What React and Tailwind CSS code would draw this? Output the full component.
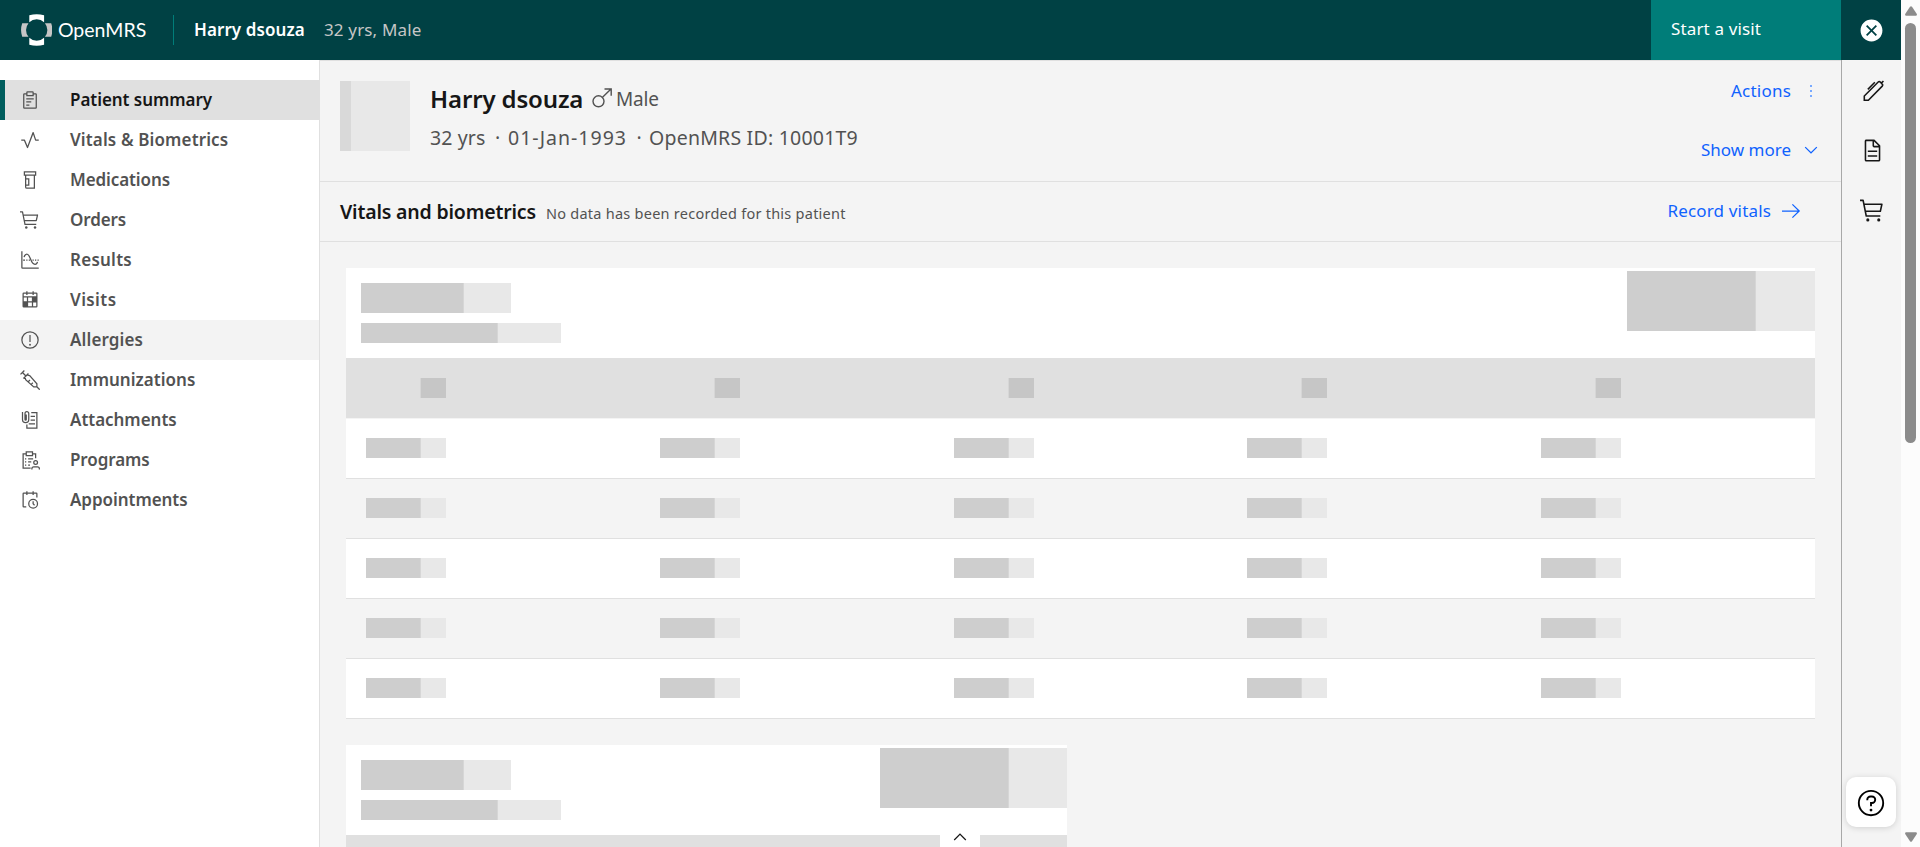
import React from "react";

const stroke = { fill: "none", stroke: "currentColor", strokeWidth: 2 };

function Icon({ className = "size-5", children }) {
  return (
    <svg viewBox="0 0 32 32" fill="currentColor" className={`block shrink-0 ${className}`} aria-hidden="true">
      {children}
    </svg>
  );
}

const Report = () => (
  <Icon>
    <path d="M10 18h8v2h-8zM10 13h12v2H10zM10 23h5v2h-5z" />
    <path d="M25,5H22V4a2,2,0,0,0-2-2H12a2,2,0,0,0-2,2V5H7A2,2,0,0,0,5,7V28a2,2,0,0,0,2,2H25a2,2,0,0,0,2-2V7A2,2,0,0,0,25,5ZM12,4h8V8H12ZM25,28H7V7h3v3H22V7h3Z" />
  </Icon>
);

const Activity = () => (
  <Icon>
    <path d="M12,29a1,1,0,0,1-.92-.62L6.33,17H2V15H7a1,1,0,0,1,.92.62L12,25.28,20.06,3.65A1,1,0,0,1,21,3a1,1,0,0,1,.93.68L25.72,15H30v2H25a1,1,0,0,1-.95-.68L21,7,12.94,28.35A1,1,0,0,1,12,29Z" />
  </Icon>
);

const Medication = () => (
  <Icon>
    <path {...stroke} d="M7 3h18v5H7zM9 9v18a2 2 0 0 0 2 2h12V9M9 14h5v10H9" />
  </Icon>
);

const Cart = ({ className }) => (
  <Icon className={className}>
    <circle cx="10" cy="28" r="2" />
    <circle cx="24" cy="28" r="2" />
    <path d="M28,7H5.82L5,2.8A1,1,0,0,0,4,2H0V4H3.18L7,23.2A1,1,0,0,0,8,24H26V22H8.82L8,18H26a1,1,0,0,0,1-.78l2-9A1,1,0,0,0,28,7ZM25.2,16H7.62L6.22,9H26.75Z" />
  </Icon>
);

const ChartAverage = () => (
  <Icon>
    <path {...stroke} d="M3 2v26a1 1 0 0 0 1 1h26" />
    <path {...stroke} d="M6.5 11.5C7.3 8 8.600 6.500 11 6.500c6 0 5.500 16.500 13 16.500 2.500 0 3.500-2 4-4" />
    <path d="M5 15h3v2H5zM10 15h2v2h-2zM14 15h2v2h-2zM20 15h2v2h-2zM24 15h2v2h-2zM28 15h2v2h-2z" />
  </Icon>
);

const CalendarHeat = () => (
  <Icon>
    <path d="M26,4H22V2H20V4H12V2H10V4H6A2,2,0,0,0,4,6V26a2,2,0,0,0,2,2H26a2,2,0,0,0,2-2V6A2,2,0,0,0,26,4ZM6,6h4V8h2V6h8V8h2V6h4v4H6Zm0,6h5v6H6ZM19,26H13V20h6Zm0-8H13V12h6Zm2,8V20h5v6Z" />
  </Icon>
);

const Warning = () => (
  <Icon>
    <path d="M16,2A14,14,0,1,0,30,16,14,14,0,0,0,16,2Zm0,26A12,12,0,1,1,28,16,12,12,0,0,1,16,28Z" />
    <path d="M15 8h2v11h-2z" />
    <circle cx="16" cy="23.500" r="1.500" />
  </Icon>
);

const Syringe = () => (
  <Icon>
    <path
      {...stroke}
      d="M.8 7 7 .8M3.900 3.900l5.600 5.600M5.500 13.500 13.500 5.500M8 11l1 4.500L22 27h5v-5L15.500 9 11 8M26.500 26.500l5 5M13.500 18.500l2.500-2.500M18 23l2.500-2.500"
    />
  </Icon>
);

const Attachment = () => (
  <Icon>
    <path {...stroke} d="M18 4h9v25H11v-6M17 10h7M17 16h7M14 22h10" />
    <path {...stroke} d="M4 3v12a5 5 0 0 0 10 0V5.500a3 3 0 0 0-6 0V15a1 1 0 0 0 2 0V7" />
  </Icon>
);

const Programs = () => (
  <Icon>
    <path {...stroke} d="M10 6H5v23h12M20 6h5v7M10 3h10v6H10zM13 14h8M13 19h5M13 24h3" />
    <path d="M8 13h2v2H8zM8 18h2v2H8zM8 23h2v2H8z" />
    <circle {...stroke} cx="25" cy="20" r="3" />
    <path {...stroke} d="M19 31v-1a3 3 0 0 1 3-3h6a3 3 0 0 1 3 3v1" />
  </Icon>
);

const EventSchedule = () => (
  <Icon>
    <path d="M21,30a8,8,0,1,1,8-8A8,8,0,0,1,21,30Zm0-14a6,6,0,1,0,6,6A6,6,0,0,0,21,16Z" />
    <path d="M22.590 25 20 22.410 20 18 22 18 22 21.590 24 23.590 22.590 25z" />
    <path d="M28,6a2,2,0,0,0-2-2H22V2H20V4H12V2H10V4H6A2,2,0,0,0,4,6V26a2,2,0,0,0,2,2h4V26H6V6h4V8h2V6h8V8h2V6h4v6h2Z" />
  </Icon>
);

const NAV = [
  { label: "Patient summary", icon: Report, tracking: "tracking-[-0.05px]", active: true },
  { label: "Vitals & Biometrics", icon: Activity, tracking: "tracking-[0.13px]" },
  { label: "Medications", icon: Medication, tracking: "tracking-[-0.1px]" },
  { label: "Orders", icon: Cart, tracking: "tracking-[-0.13px]" },
  { label: "Results", icon: ChartAverage, tracking: "tracking-[0.25px]" },
  { label: "Visits", icon: CalendarHeat, tracking: "tracking-[0.4px]" },
  { label: "Allergies", icon: Warning, tracking: "tracking-[0.11px]", hovered: true },
  { label: "Immunizations", icon: Syringe, tracking: "tracking-[0.02px]" },
  { label: "Attachments", icon: Attachment, tracking: "tracking-[-0.03px]" },
  { label: "Programs", icon: Programs, tracking: "tracking-[-0.1px]" },
  { label: "Appointments", icon: EventSchedule, tracking: "tracking-[-0.05px]" },
];

function Logo() {
  const cap = "M8.300 1.300Q15.700 -.9 23.100 1.300V8.200A10.600 10.600 0 0 0 8.300 8.200Z";
  const side = "M8.900 1.500Q15.700 -.8 22.500 1.500V7.800A10.600 10.600 0 0 0 8.900 7.800Z";
  return (
    <svg viewBox="0 0 31.400 32" className="block h-8 w-[31.4px] shrink-0" aria-hidden="true">
      <path d={cap} fill="#fff" />
      <path d={cap} fill="#fff" transform="rotate(180 15.700 16)" />
      <path d={side} fill="#c6c6c6" transform="rotate(90 15.700 16)" />
      <path d={side} fill="#c6c6c6" transform="rotate(-90 15.700 16)" />
    </svg>
  );
}

function Header() {
  return (
    <header className="flex h-[60px] shrink-0 items-center bg-[#004144] text-[17px] text-white">
      <div className="flex w-[173px] items-center gap-[5.5px] pl-[21px]">
        <Logo />
        <span className="pb-px font-[Lato,sans-serif] text-[19.5px] leading-none tracking-[0.02px]">OpenMRS</span>
      </div>
      <div className="h-[30px] w-px bg-[#007d79]" />
      <span className="ml-5 w-[111px] pb-[2px] font-semibold tracking-[0.08px]">Harry dsouza</span>
      <span className="ml-[19px] pb-[2px] tracking-[0.15px] text-[#c6c6c6]">32 yrs, Male</span>
      <button className="ml-auto flex h-full w-[190px] items-center bg-[#007d79] pb-[3px] pl-5 tracking-[0.14px]">
        Start a visit
      </button>
      <button className="flex h-full w-[60px] items-center justify-center">
        <Icon className="size-[25px]">
          <path d="M16,2C8.200,2,2,8.200,2,16s6.200,14,14,14s14-6.200,14-14S23.800,2,16,2z M21.400,23L16,17.600L10.600,23L9,21.400l5.400-5.400L9,10.600L10.600,9l5.400,5.400L21.400,9l1.600,1.600L17.600,16l5.400,5.400L21.400,23z" />
        </Icon>
      </button>
    </header>
  );
}

function SideNav() {
  return (
    <nav className="w-80 shrink-0 border-r border-[#e0e0e0] bg-white pt-5">
      {NAV.map(({ label, icon: Glyph, tracking, active, hovered }) => (
        <a
          key={label}
          className={`flex h-10 items-center border-l-[5px] pl-[15px] text-[17px] font-semibold text-[#525252] ${
            active ? "border-[#005d5d] bg-[#e0e0e0]" : hovered ? "border-[#f3f3f3] bg-[#f3f3f3]" : "border-transparent"
          }`}
        >
          <Glyph />
          <span className={`ml-[30px] pb-[2px] ${tracking} ${active ? "text-[#161616]" : ""}`}>{label}</span>
        </a>
      ))}
    </nav>
  );
}

function PatientBanner() {
  return (
    <section className="flex h-[122px] shrink-0 border-y border-[#e0e0e0] pt-5 pl-5">
      <div className="h-[70px] w-[70px] bg-[#e8e8e8]">
        <div className="h-full w-[11px] bg-[#d9d9d9]" />
      </div>
      <div className="ml-5 flex flex-col text-[#525252]">
        <div className="flex h-[37px] items-center">
          <h1 className="w-[155px] pb-[2px] text-[24px] font-semibold tracking-[-0.15px] whitespace-nowrap text-[#161616]">
            Harry dsouza
          </h1>
          <svg viewBox="0 0 20 20" className="mb-[3px] ml-[7px] block size-5 shrink-0" aria-hidden="true">
            <g fill="none" stroke="currentColor" strokeWidth="1.400">
              <circle cx="6.500" cy="13.300" r="5.500" />
              <path d="M10.500 9.200 19 1M12.500 1H19.200V7.800" />
            </g>
          </svg>
          <span className="ml-1 text-[19px] tracking-[-0.15px]">Male</span>
        </div>
        <div className="flex h-10 items-center text-[19.5px]">
          <span className="w-[57px] tracking-[0.12px]">32 yrs</span>
          <span className="w-[21px] text-center">·</span>
          <span className="w-[121px] tracking-[1.02px]">01-Jan-1993</span>
          <span className="w-[20px] text-center">·</span>
          <span className="tracking-[0.22px]">OpenMRS ID: 10001T9</span>
        </div>
      </div>
      <div className="mr-5 ml-auto flex flex-col items-end text-[17px] text-[#0f62fe]">
        <button className="flex h-5 items-center">
          <span className="pb-[2px] tracking-[0.21px]">Actions</span>
          <span className="ml-[10px] flex size-5 flex-col items-center justify-center gap-[3px] text-[#78a9ff]">
            <i className="block size-[2px] bg-current" />
            <i className="block size-[2px] bg-current" />
            <i className="block size-[2px] bg-current" />
          </span>
        </button>
        <button className="mt-[39px] flex h-5 items-center">
          <span className="pb-[2px]">Show more</span>
          <Icon className="ml-[10px] size-5">
            <path d="M16 22 6 12 7.400 10.600 16 19.200 24.600 10.600 26 12z" />
          </Icon>
        </button>
      </div>
    </section>
  );
}

function VitalsHeader() {
  return (
    <section className="flex h-[60px] shrink-0 items-center border-b border-[#e0e0e0] pl-5">
      <h2 className="w-[206px] text-[19.5px] font-semibold tracking-[-0.18px] whitespace-nowrap text-[#161616]">
        Vitals and biometrics
      </h2>
      <p className="mt-1 text-[14.5px] tracking-[0.25px] text-[#525252]">No data has been recorded for this patient</p>
      <button className="mr-10 ml-auto flex items-center pb-px text-[17px] text-[#0f62fe]">
        <span className="pb-[2px] tracking-[0.16px]">Record vitals</span>
        <svg viewBox="0 0 20 20" className="ml-[10px] block size-5" aria-hidden="true">
          <path d="M1 10H18.300M11.400 3.400 18.200 10 11.400 16.600" fill="none" stroke="currentColor" strokeWidth="1.250" />
        </svg>
      </button>
    </section>
  );
}

function Bar({ className, fill }) {
  return (
    <div className={`shrink-0 bg-[#e8e8e8] ${className}`}>
      <div className={`h-full border-r border-[#d6d6d6] bg-[#cecece] ${fill}`} />
    </div>
  );
}

function SkeletonTable({ className, actionWidth, columns, rows }) {
  return (
    <div className={className}>
      <div className="flex h-[90px] justify-between bg-white">
        <div className="flex flex-col gap-[10px] pt-[15px] pl-[15px]">
          <Bar className="h-[30px] w-[150px]" fill="w-[103px]" />
          <Bar className="h-5 w-[200px]" fill="w-[137px]" />
        </div>
        <Bar className={`mt-[3px] h-[60px] ${actionWidth}`} fill="w-[129px]" />
      </div>
      <div className="grid h-[60px] grid-cols-5 items-center bg-[#e0e0e0]">
        {Array.from({ length: columns }, (_, i) => (
          <div key={i} className="flex w-[100px] justify-end">
            <div className="h-5 w-[26px] border-l border-[#d6d6d6] bg-[#c6c6c6]" />
          </div>
        ))}
      </div>
      <div className="border-t border-[#f4f4f4]">
        {Array.from({ length: rows }, (_, r) => (
          <div
            key={r}
            className={`grid h-[60px] grid-cols-5 border-b border-[#e0e0e0] pt-[19px] first:-mt-px first:h-[61px] first:border-t first:border-t-[#f4f4f4] ${
              r % 2 ? "bg-[#f4f4f4]" : "bg-white"
            }`}
          >
            {Array.from({ length: columns }, (_, c) => (
              <Bar key={c} className="ml-5 h-5 w-20" fill="w-[55px]" />
            ))}
          </div>
        ))}
      </div>
    </div>
  );
}

function ActionRail() {
  return (
    <aside className="relative w-[60px] shrink-0 border-l border-[#a8a8a8] bg-[#f4f4f4] text-[#161616]">
      {[
        <Icon key="pen" className="size-[25px]">
          <path
            {...stroke}
            d="M5.500 28.500V23L23.300 5.200a1.800 1.800 0 0 1 2.600 0l2.600 2.600a1.800 1.800 0 0 1 0 2.600L10.700 28.500zM27.300 6.500 30 3.800M10 14.500 19 5.500"
          />
        </Icon>,
        <Icon key="doc" className="size-[25px]">
          <path d="M25.700,9.300l-7-7C18.500,2.100,18.300,2,18,2H8C6.900,2,6,2.900,6,4v24c0,1.100,0.900,2,2,2h16c1.100,0,2-0.900,2-2V10C26,9.700,25.900,9.500,25.700,9.300z M18,4.400l5.600,5.600H18V4.400z M24,28H8V4h8v6c0,1.100,0.900,2,2,2h6V28z" />
          <path d="M10 22h12v2H10zM10 16h12v2H10z" />
        </Icon>,
        <Cart key="cart" className="size-[25px]" />,
      ].map((glyph, i) => (
        <button key={i} className="flex h-[60px] w-full items-center justify-center pl-px">
          {glyph}
        </button>
      ))}
      <button className="absolute bottom-5 left-[4px] flex size-[50px] items-center justify-center rounded-[10px] bg-white pt-[2px] text-black shadow-[0_1px_6px_rgba(0,0,0,0.15)]">
        <Icon className="size-[30px]">
          <path d="M16,2A14,14,0,1,0,30,16,14,14,0,0,0,16,2Zm0,26A12,12,0,1,1,28,16,12,12,0,0,1,16,28Z" />
          <path d="M17,8H15.500A4.490,4.490,0,0,0,11,12.500V13h2v-.5A2.500,2.500,0,0,1,15.500,10H17a2.500,2.500,0,0,1,0,5H15v4.500h2V17a4.500,4.500,0,0,0,0-9Z" />
          <circle cx="16" cy="23.500" r="1.500" />
        </Icon>
      </button>
    </aside>
  );
}

function Scrollbar() {
  return (
    <div className="flex w-[19px] shrink-0 flex-col items-center bg-[#fcfcfc] pt-[6px] pb-[5px] text-[#8b8b8b]">
      <svg viewBox="0 0 12 10" fill="currentColor" className="block h-[10px] w-3" aria-hidden="true">
        <path d="M5 .8q1-1.200 2 0L11.800 8q.5 1.500-1 1.700H1.200Q-.3 9.500.2 8z" />
      </svg>
      <div className="mt-[7px] h-[420px] w-[11px] rounded-full bg-current" />
      <svg viewBox="0 0 12 10" fill="currentColor" className="mt-auto block h-[10px] w-3" aria-hidden="true">
        <path d="M5 9.200q1 1.200 2 0L11.800 2q.5-1.500-1-1.700H1.200Q-.3.5.2 2z" />
      </svg>
    </div>
  );
}

export default function App() {
  return (
    <div className="flex h-[847px] w-[1920px] overflow-hidden bg-white font-['Noto_Sans',sans-serif] leading-none">
      <div className="flex min-w-0 flex-1 flex-col">
        <Header />
        <div className="flex min-h-0 flex-1">
          <SideNav />
          <main className="relative flex min-w-0 flex-1 flex-col overflow-hidden bg-[#f4f4f4]">
            <PatientBanner />
            <VitalsHeader />
            <div className="flex flex-col items-start gap-[26px] pt-[26px] pl-[26px]">
              <SkeletonTable className="w-[1469px]" actionWidth="w-[188px]" columns={5} rows={5} />
              <SkeletonTable className="w-[721px]" actionWidth="w-[187px]" columns={0} rows={0} />
            </div>
            <button className="absolute bottom-0 left-[620px] flex h-5 w-10 items-center justify-center bg-white text-[#161616]">
              <Icon className="size-5">
                <path d="M16 10 26 20 24.600 21.400 16 12.800 7.400 21.400 6 20z" />
              </Icon>
            </button>
          </main>
          <ActionRail />
        </div>
      </div>
      <Scrollbar />
    </div>
  );
}
